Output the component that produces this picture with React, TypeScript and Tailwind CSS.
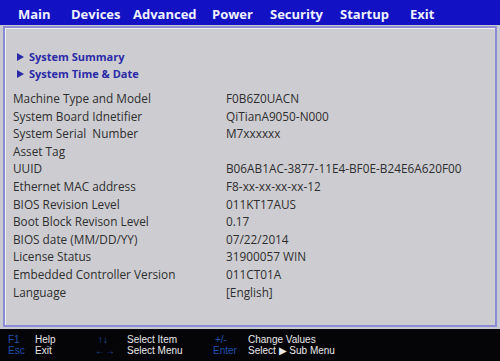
// BIOS setup "Main" screen — static recreation

const MENU: { label: string; w: string }[] = [
  { label: 'Main', w: 'w-[53px]' },
  { label: 'Devices', w: 'w-[62px]' },
  { label: 'Advanced', w: 'w-[79px]' },
  { label: 'Power', w: 'w-[58px]' },
  { label: 'Security', w: 'w-[70px]' },
  { label: 'Startup', w: 'w-[70px]' },
  { label: 'Exit', w: 'w-[40px]' },
];

const ROWS: [string, string][] = [
  ['Machine Type and Model', 'F0B6Z0UACN'],
  ['System Board Idnetifier', 'QiTianA9050-N000'],
  ['System Serial  Number', 'M7xxxxxx'],
  ['Asset Tag', ''],
  ['UUID', 'B06AB1AC-3877-11E4-BF0E-B24E6A620F00'],
  ['Ethernet MAC address', 'F8-xx-xx-xx-xx-12'],
  ['BIOS Revision Level', '011KT17AUS'],
  ['Boot Block Revison Level', '0.17'],
  ['BIOS date (MM/DD/YY)', '07/22/2014'],
  ['License Status', '31900057 WIN'],
  ['Embedded Controller Version', '011CT01A'],
  ['Language', '[English]'],
];

function Tri() {
  return (
    <svg width="7" height="8" viewBox="0 0 7 8" className="mr-[5px]">
      <path d="M0 0 L7 4 L0 8 Z" fill="#2a2aa8" />
    </svg>
  );
}

export default function App() {
  return (
    <div
      className="w-[500px] h-[361px] flex flex-col bg-[#c9c9d2] overflow-hidden"
      style={{ fontFamily: '"Open Sans", "Noto Sans", sans-serif' }}
    >
      {/* Top menu bar */}
      <div className="h-[25px] bg-[#1212c4] flex items-center pt-[3px] pl-[18px] shrink-0">
        {MENU.map(m => (
          <div key={m.label} className={`${m.w} text-[13px] font-bold text-[#eef0ff] leading-none`}>
            {m.label}
          </div>
        ))}
      </div>

      {/* Main panel */}
      <div className="flex-1 px-[3px] pt-[1px] pb-[2px] flex">
        <div className="flex-1 border-2 border-[#8c8cd4] bg-[#cdcdd1] shadow-[inset_1px_1px_0_#eeeef6] pl-[8px] pt-[21px]">
          <div className="flex flex-col gap-[2px] pl-[4px] text-[11px] font-bold text-[#2a2aa8] leading-[15px]">
            <div className="flex items-center"><Tri />System Summary</div>
            <div className="flex items-center"><Tri />System Time &amp; Date</div>
          </div>
          <div className="mt-[9px] text-[11.8px] text-[#2e2e2e] leading-[17.6px]">
            {ROWS.map(([k, v]) => (
              <div key={k} className="flex h-[17.6px]">
                <div className="w-[213px] whitespace-pre">{k}</div>
                <div>{v}</div>
              </div>
            ))}
          </div>
        </div>
      </div>

      {/* Footer help bar */}
      <div
        className="h-[32px] bg-[#050508] shrink-0 flex items-center text-[10px] leading-[11px] pl-[8px]"
        style={{ fontFamily: '"Liberation Sans", Arial, sans-serif' }}
      >
        <div className="flex flex-col text-[#2050b0] w-[27px]">
          <span>F1</span>
          <span>Esc</span>
        </div>
        <div className="flex flex-col text-[#e8e8e8] w-[60px]">
          <span>Help</span>
          <span>Exit</span>
        </div>
        <div className="flex flex-col text-[#2050b0] w-[32px]">
          <span className="pl-[3px]">↑↓</span>
          <span>←→</span>
        </div>
        <div className="flex flex-col text-[#e8e8e8] w-[86px]">
          <span>Select Item</span>
          <span>Select Menu</span>
        </div>
        <div className="flex flex-col text-[#2050b0] w-[35px]">
          <span className="pl-[2px]">+/-</span>
          <span>Enter</span>
        </div>
        <div className="flex flex-col text-[#e8e8e8]">
          <span>Change Values</span>
          <span>Select ▶ Sub Menu</span>
        </div>
      </div>
    </div>
  );
}
